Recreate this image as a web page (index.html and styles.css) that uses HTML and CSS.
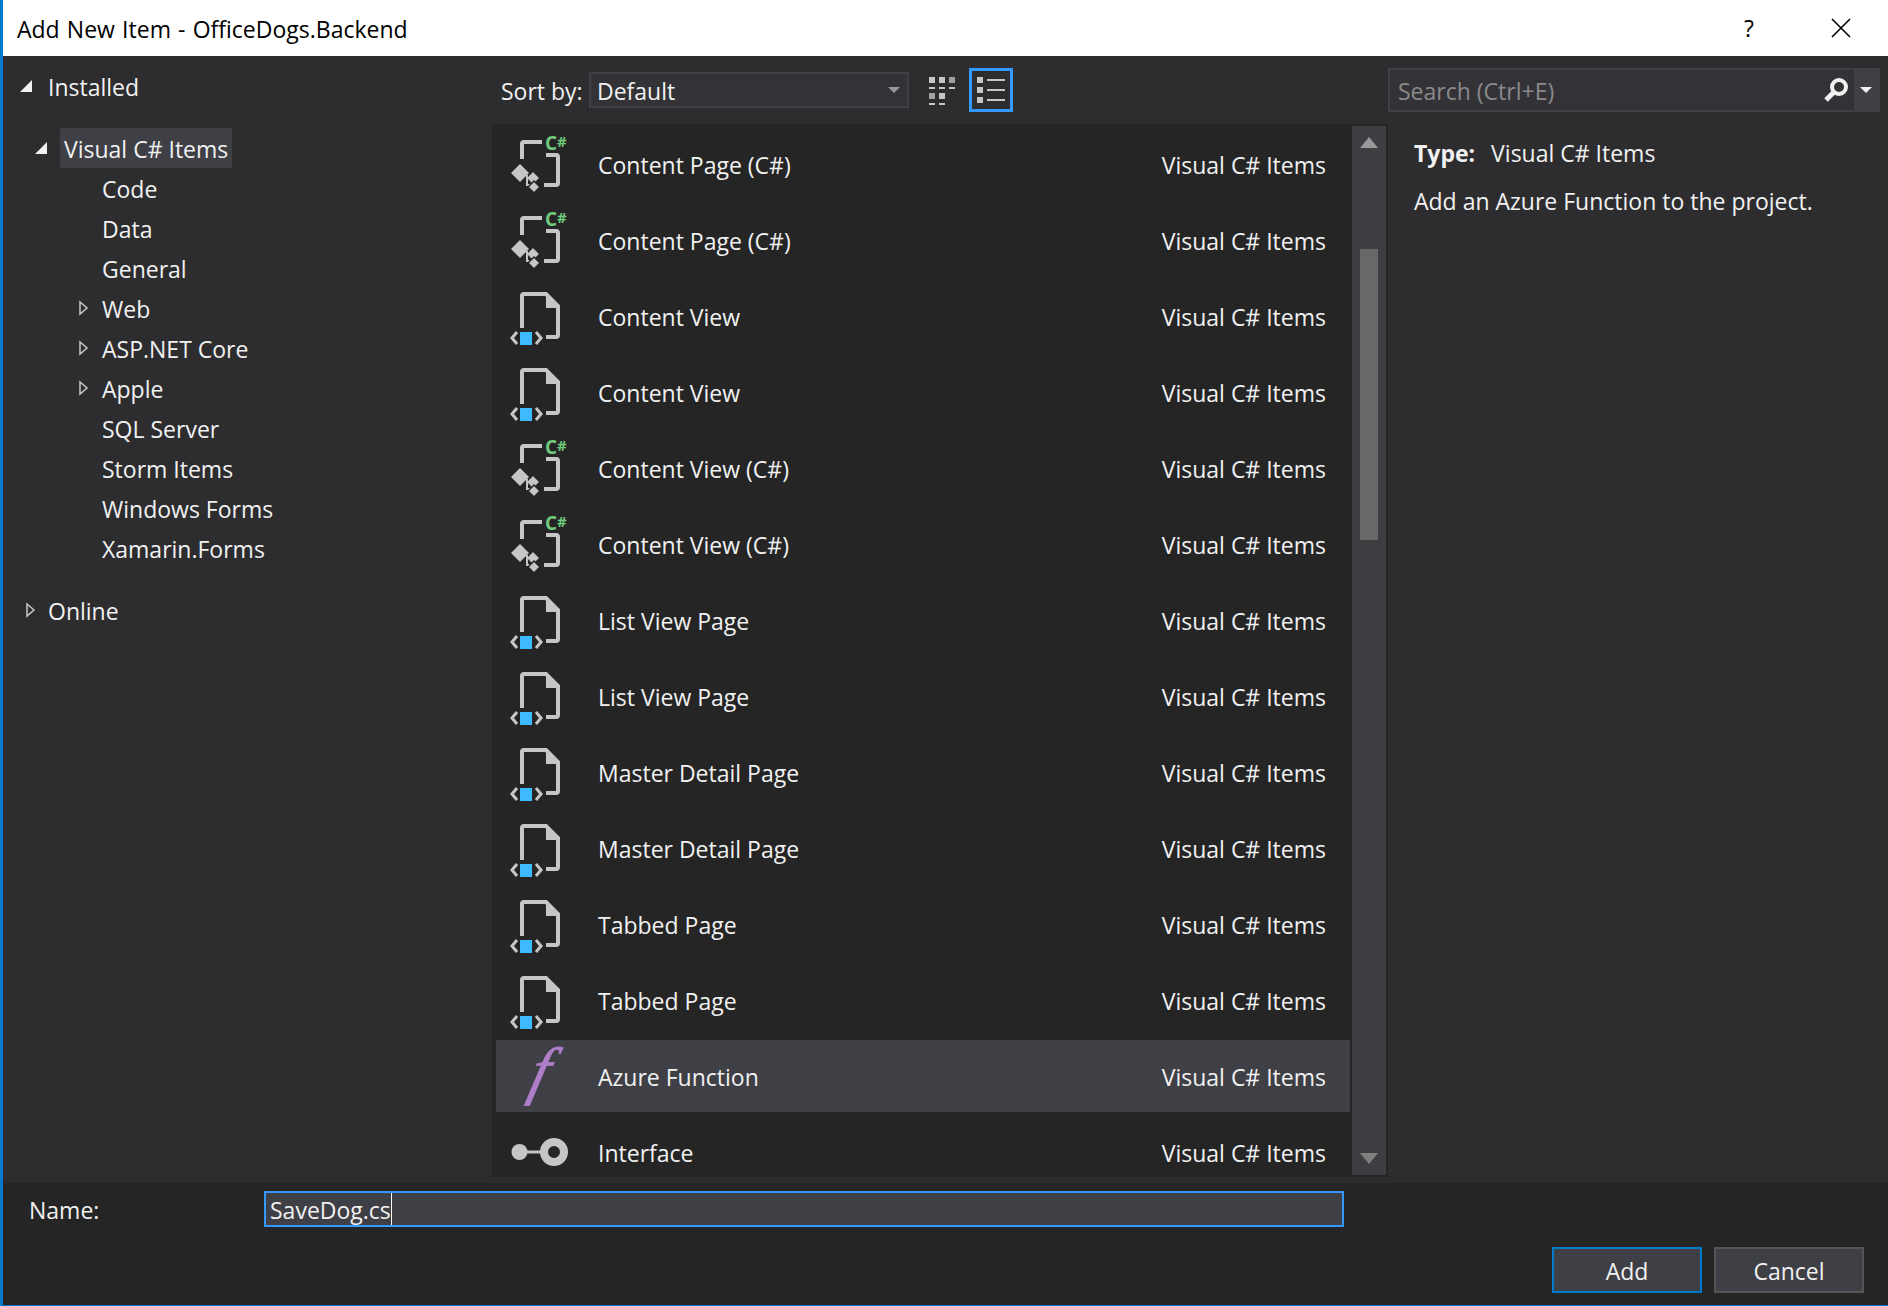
FILE: index.html
```html
<!DOCTYPE html>
<html lang="en">
    <head>
        <meta charset="utf-8">
        <title>Add New Item - OfficeDogs.Backend</title>
        <link rel="stylesheet" href="styles.css">
    </head>
    <body>
        <!-- Icons used more than once -->
        <svg class="sprite">
            <symbol id="i-page" viewBox="0 0 64 72">
                <path d="M14 48V16q0-2 2-2H38L50 26V55q0 2-2 2H38" fill="none" stroke="#c6c6c6" stroke-width="4"/>
                <path d="M38 14L52 28H38Z" fill="#c6c6c6"/>
                <rect x="12" y="52" width="12" height="13" fill="#3ebbff"/>
                <path d="M9 52L4 58L9 64M28 52L33 58L28 64" fill="none" stroke="#c6c6c6" stroke-width="3"/>
            </symbol>
            <symbol id="i-code" viewBox="0 0 64 72">
                <path d="M14 31V16q0-2 2-2H34M38 27H48q2 0 2 2V55q0 2-2 2H36" fill="none" stroke="#c6c6c6" stroke-width="4"/>
                <path d="M12 36L21 45L12 54L3 45Z" fill="#c6c6c6"/>
                <path d="M25 43L32 50L25 57L18 50Z" fill="#c6c6c6" stroke="#252526" stroke-width="1.500"/>
                <path d="M19 47V57H24" fill="none" stroke="#c6c6c6" stroke-width="2"/>
                <path d="M26 53L32 59L26 65L20 59Z" fill="#c6c6c6" stroke="#252526" stroke-width="1.500"/>
                <text x="37" y="22" class="csharp-c">C</text>
                <text x="49" y="19" class="csharp-hash">#</text>
            </symbol>
            <symbol id="i-open" viewBox="0 0 12 12">
                <path d="M12 0V12H0Z" fill="#f1f1f1"/>
            </symbol>
            <symbol id="i-closed" viewBox="0 0 12 16">
                <path d="M2 2L9 8L2 14Z" fill="none" stroke="#c8c8c8" stroke-width="1.500"/>
            </symbol>
        </svg>

        <div class="window">
            <header class="titlebar">
                <span class="title">Add New Item - OfficeDogs.Backend</span>
                <span class="help">?</span>
                <svg class="close" width="20" height="20" viewBox="0 0 20 20"><path d="M1 1L19 19M19 1L1 19" stroke="#000" stroke-width="1.600"/></svg>
            </header>

            <main class="body">
                <nav class="tree">
                    <div class="tree-row root"><svg class="arrow" width="12" height="12"><use href="#i-open"/></svg>Installed</div>
                    <div class="tree-row lang"><svg class="arrow" width="12" height="12"><use href="#i-open"/></svg><span class="tree-current">Visual C# Items</span></div>
                    <div class="tree-row leaf">Code</div>
                    <div class="tree-row leaf">Data</div>
                    <div class="tree-row leaf">General</div>
                    <div class="tree-row branch"><svg class="arrow" width="12" height="16"><use href="#i-closed"/></svg>Web</div>
                    <div class="tree-row branch"><svg class="arrow" width="12" height="16"><use href="#i-closed"/></svg>ASP.NET Core</div>
                    <div class="tree-row branch"><svg class="arrow" width="12" height="16"><use href="#i-closed"/></svg>Apple</div>
                    <div class="tree-row leaf">SQL Server</div>
                    <div class="tree-row leaf">Storm Items</div>
                    <div class="tree-row leaf">Windows Forms</div>
                    <div class="tree-row leaf">Xamarin.Forms</div>
                    <div class="tree-row online"><svg class="arrow" width="12" height="16"><use href="#i-closed"/></svg>Online</div>
                </nav>

                <section class="center">
                    <div class="toolbar">
                        <span class="sort-label">Sort by:</span>
                        <div class="combo">
                            <span class="combo-value">Default</span>
                            <svg width="12" height="6"><path d="M0 0H12L6 6Z" fill="#999"/></svg>
                        </div>
                        <svg class="view-small" width="28" height="30" viewBox="0 0 28 30">
                            <path d="M1 2h6v6H1zM11 2h6v6h-6zM1 12h6v2H1zM11 12h6v2h-6zM21 12h6v2h-6zM11 18h6v6h-6zM1 28h6v2H1zM11 28h6v2h-6z" fill="#c6c6c6"/>
                            <path d="M21 2h6v6h-6zM1 18h6v6H1z" fill="#a0a0a0"/>
                        </svg>
                        <div class="view-list">
                            <svg width="28" height="26" viewBox="0 0 28 26">
                                <path d="M0 0h6v6H0zM0 10h6v6H0zM0 20h6v6H0zM10 2h18v2H10zM10 12h18v2H10zM10 22h18v2H10z" fill="#c6c6c6"/>
                            </svg>
                        </div>
                    </div>

                    <div class="list">
                        <div class="items">
                            <div class="item"><svg class="item-icon"><use href="#i-code"/></svg><span class="item-name">Content Page (C#)</span><span class="item-type">Visual C# Items</span></div>
                            <div class="item"><svg class="item-icon"><use href="#i-code"/></svg><span class="item-name">Content Page (C#)</span><span class="item-type">Visual C# Items</span></div>
                            <div class="item"><svg class="item-icon"><use href="#i-page"/></svg><span class="item-name">Content View</span><span class="item-type">Visual C# Items</span></div>
                            <div class="item"><svg class="item-icon"><use href="#i-page"/></svg><span class="item-name">Content View</span><span class="item-type">Visual C# Items</span></div>
                            <div class="item"><svg class="item-icon"><use href="#i-code"/></svg><span class="item-name">Content View (C#)</span><span class="item-type">Visual C# Items</span></div>
                            <div class="item"><svg class="item-icon"><use href="#i-code"/></svg><span class="item-name">Content View (C#)</span><span class="item-type">Visual C# Items</span></div>
                            <div class="item"><svg class="item-icon"><use href="#i-page"/></svg><span class="item-name">List View Page</span><span class="item-type">Visual C# Items</span></div>
                            <div class="item"><svg class="item-icon"><use href="#i-page"/></svg><span class="item-name">List View Page</span><span class="item-type">Visual C# Items</span></div>
                            <div class="item"><svg class="item-icon"><use href="#i-page"/></svg><span class="item-name">Master Detail Page</span><span class="item-type">Visual C# Items</span></div>
                            <div class="item"><svg class="item-icon"><use href="#i-page"/></svg><span class="item-name">Master Detail Page</span><span class="item-type">Visual C# Items</span></div>
                            <div class="item"><svg class="item-icon"><use href="#i-page"/></svg><span class="item-name">Tabbed Page</span><span class="item-type">Visual C# Items</span></div>
                            <div class="item"><svg class="item-icon"><use href="#i-page"/></svg><span class="item-name">Tabbed Page</span><span class="item-type">Visual C# Items</span></div>
                            <div class="item selected">
                                <svg class="item-icon" viewBox="0 0 64 72"><text x="0" y="0" transform="translate(19 52) skewX(-14)" class="func-glyph">f</text></svg>
                                <span class="item-name">Azure Function</span><span class="item-type">Visual C# Items</span>
                            </div>
                            <div class="item">
                                <svg class="item-icon" viewBox="0 0 64 72">
                                    <circle cx="11.500" cy="36" r="8" fill="#c6c6c6"/>
                                    <path d="M18 36H34" stroke="#c6c6c6" stroke-width="3"/>
                                    <circle cx="46" cy="36" r="10" fill="none" stroke="#c6c6c6" stroke-width="8"/>
                                </svg>
                                <span class="item-name">Interface</span><span class="item-type">Visual C# Items</span>
                            </div>
                        </div>
                        <div class="scrollbar">
                            <svg width="18" height="11"><path d="M9 0L18 11H0Z" fill="#999"/></svg>
                            <div class="thumb"></div>
                            <svg width="18" height="11"><path d="M0 0H18L9 11Z" fill="#808080"/></svg>
                        </div>
                    </div>
                </section>

                <aside class="side">
                    <div class="search">
                        <span class="search-text">Search (Ctrl+E)</span>
                        <svg class="search-icon" width="26" height="26" viewBox="0 0 26 26">
                            <circle cx="16" cy="10" r="7" fill="none" stroke="#f1f1f1" stroke-width="4"/>
                            <path d="M11 15L3 23" stroke="#f1f1f1" stroke-width="5"/>
                        </svg>
                        <div class="search-drop"><svg width="12" height="6"><path d="M0 0H12L6 6Z" fill="#f1f1f1"/></svg></div>
                    </div>
                    <div class="details">
                        <p class="detail-type"><strong>Type:</strong><span>Visual C# Items</span></p>
                        <p class="detail-text">Add an Azure Function to the project.</p>
                    </div>
                </aside>
            </main>

            <footer class="bottom">
                <div class="name-row">
                    <span class="name-label">Name:</span>
                    <div class="name-input"><span class="name-value">SaveDog.cs</span><i class="caret"></i></div>
                </div>
                <div class="buttons">
                    <button class="btn primary">Add</button>
                    <button class="btn">Cancel</button>
                </div>
            </footer>
        </div>
    </body>
</html>
```

FILE: styles.css
```css
html {
    background-color: #252526;
    color: #f1f1f1;
    font-family: "Open Sans", sans-serif;
    font-size: 23px;
}

body {
    margin: 0;
}

.sprite {
    display: none;
}

/* Open Sans sits a little high compared with the original font */
.title,
.sort-label,
.combo-value,
.search-text,
.item-name,
.item-type,
.name-label,
.name-value,
.btn {
    padding-top: 2px;
}

.window {
    display: flex;
    flex-direction: column;
    box-sizing: border-box;
    height: 1306px;
    border-left: 3px solid #007acc;
    border-bottom: 1px solid #007acc;
    overflow: hidden;
}

/* Title bar */
.titlebar {
    display: flex;
    align-items: center;
    flex: 0 0 56px;
    background-color: #fff;
    color: #000;
    padding-left: 14px;
}

.title {
    flex: 1;
    word-spacing: 1.200px;
}

.help {
    margin-right: 77px;
}

.close {
    margin-right: 37px;
}

/* Three columns */
.body {
    display: flex;
    flex: 0 0 1127px;
    background-color: #2d2d30;
}

.tree {
    flex: 0 0 489px;
    box-sizing: border-box;
    padding-top: 10px;
}

.tree-row {
    display: flex;
    align-items: center;
    box-sizing: border-box;
    height: 40px;
    padding-top: 2px;
}

.arrow {
    margin-top: -2px;
}

.root {
    padding-left: 17px;
    margin-bottom: 22px;
}

.root .arrow {
    margin-right: 16px;
}

.lang {
    padding-left: 32px;
}

.lang .arrow {
    margin-right: 13px;
}

.tree-current {
    background-color: #3f3f46;
    line-height: 38px;
    margin-top: -2px;
    padding: 2px 4px 0;
}

.leaf {
    padding-left: 99px;
}

.branch {
    padding-left: 75px;
}

.branch .arrow {
    margin-right: 12px;
}

.online {
    padding-left: 22px;
    margin-top: 22px;
}

.online .arrow {
    margin-right: 11px;
}

.center {
    flex: 0 0 896px;
}

.toolbar {
    display: flex;
    align-items: center;
    height: 68px;
    padding-left: 9px;
}

.sort-label {
    width: 88px;
    white-space: nowrap;
}

.combo {
    display: flex;
    align-items: center;
    justify-content: space-between;
    box-sizing: border-box;
    width: 320px;
    height: 36px;
    background-color: #333337;
    border: 2px solid #3f3f46;
    padding: 0 7px 0 6px;
}

.view-small {
    margin-left: 19px;
}

.view-list {
    display: flex;
    align-items: center;
    justify-content: center;
    box-sizing: border-box;
    width: 44px;
    height: 44px;
    border: 3px solid #3399ff;
    margin-left: 13px;
}

/* Template list */
.list {
    display: flex;
    justify-content: space-between;
    box-sizing: border-box;
    height: 1053px;
    background-color: #252526;
    padding: 2px;
    overflow: hidden;
}

.items {
    flex: 0 0 854px;
    padding: 2px 0 0 2px;
}

.item {
    display: flex;
    align-items: center;
    height: 72px;
    margin-bottom: 4px;
    padding-left: 12px;
    padding-right: 24px;
}

.item.selected {
    background-color: #3f3f46;
}

.item-icon {
    flex: 0 0 64px;
    width: 64px;
    height: 72px;
    overflow: visible;
}

.item-name {
    flex: 1;
    margin-left: 26px;
}

.csharp-c {
    font: bold 19px "Open Sans", sans-serif;
    fill: #6fc97a;
}

.csharp-hash {
    font: bold 15px "Open Sans", sans-serif;
    fill: #6fc97a;
}

.func-glyph {
    font: italic 64px "Liberation Serif", serif;
    fill: #ae7fc8;
    stroke: #ae7fc8;
    stroke-width: 0.800px;
}

.scrollbar {
    display: flex;
    flex-direction: column;
    align-items: center;
    flex: 0 0 34px;
    background-color: #3e3e42;
    padding-top: 11px;
    box-sizing: border-box;
    height: 1049px;
}

.thumb {
    width: 18px;
    height: 291px;
    background-color: #686868;
    margin-top: 101px;
    margin-bottom: 613px;
}

/* Right column */
.side {
    flex: 1;
    padding-top: 12px;
}

.search {
    display: flex;
    align-items: center;
    box-sizing: border-box;
    width: 492px;
    height: 44px;
    background-color: #333337;
    border: 2px solid #3f3f46;
}

.search-text {
    flex: 1;
    color: #8a8a8a;
    padding-left: 8px;
}

.search-icon {
    margin-right: 5px;
}

.search-drop {
    display: flex;
    align-items: center;
    justify-content: center;
    width: 24px;
    height: 100%;
    background-color: #3f3f46;
}

.details {
    padding: 26px 0 0 26px;
}

.details p {
    margin: 0 0 18px;
    line-height: 30px;
}

.detail-type strong {
    margin-right: 16px;
}

/* Name and buttons */
.bottom {
    flex: 1;
    padding-top: 8px;
}

.name-row {
    display: flex;
    align-items: center;
}

.name-label {
    width: 235px;
    padding-left: 26px;
}

.name-input {
    display: flex;
    align-items: center;
    box-sizing: border-box;
    width: 1080px;
    height: 36px;
    background-color: #3f3f46;
    border: 2px solid #3399ff;
    padding-left: 4px;
}

.caret {
    width: 1px;
    height: 32px;
    background-color: #fff;
}

.buttons {
    display: flex;
    justify-content: flex-end;
    gap: 12px;
    margin-top: 20px;
    padding-right: 24px;
}

.btn {
    width: 150px;
    height: 46px;
    background-color: #3f3f46;
    border: 2px solid #555;
    color: #f1f1f1;
    font: inherit;
}

.btn.primary {
    border-color: #007acc;
}
```
